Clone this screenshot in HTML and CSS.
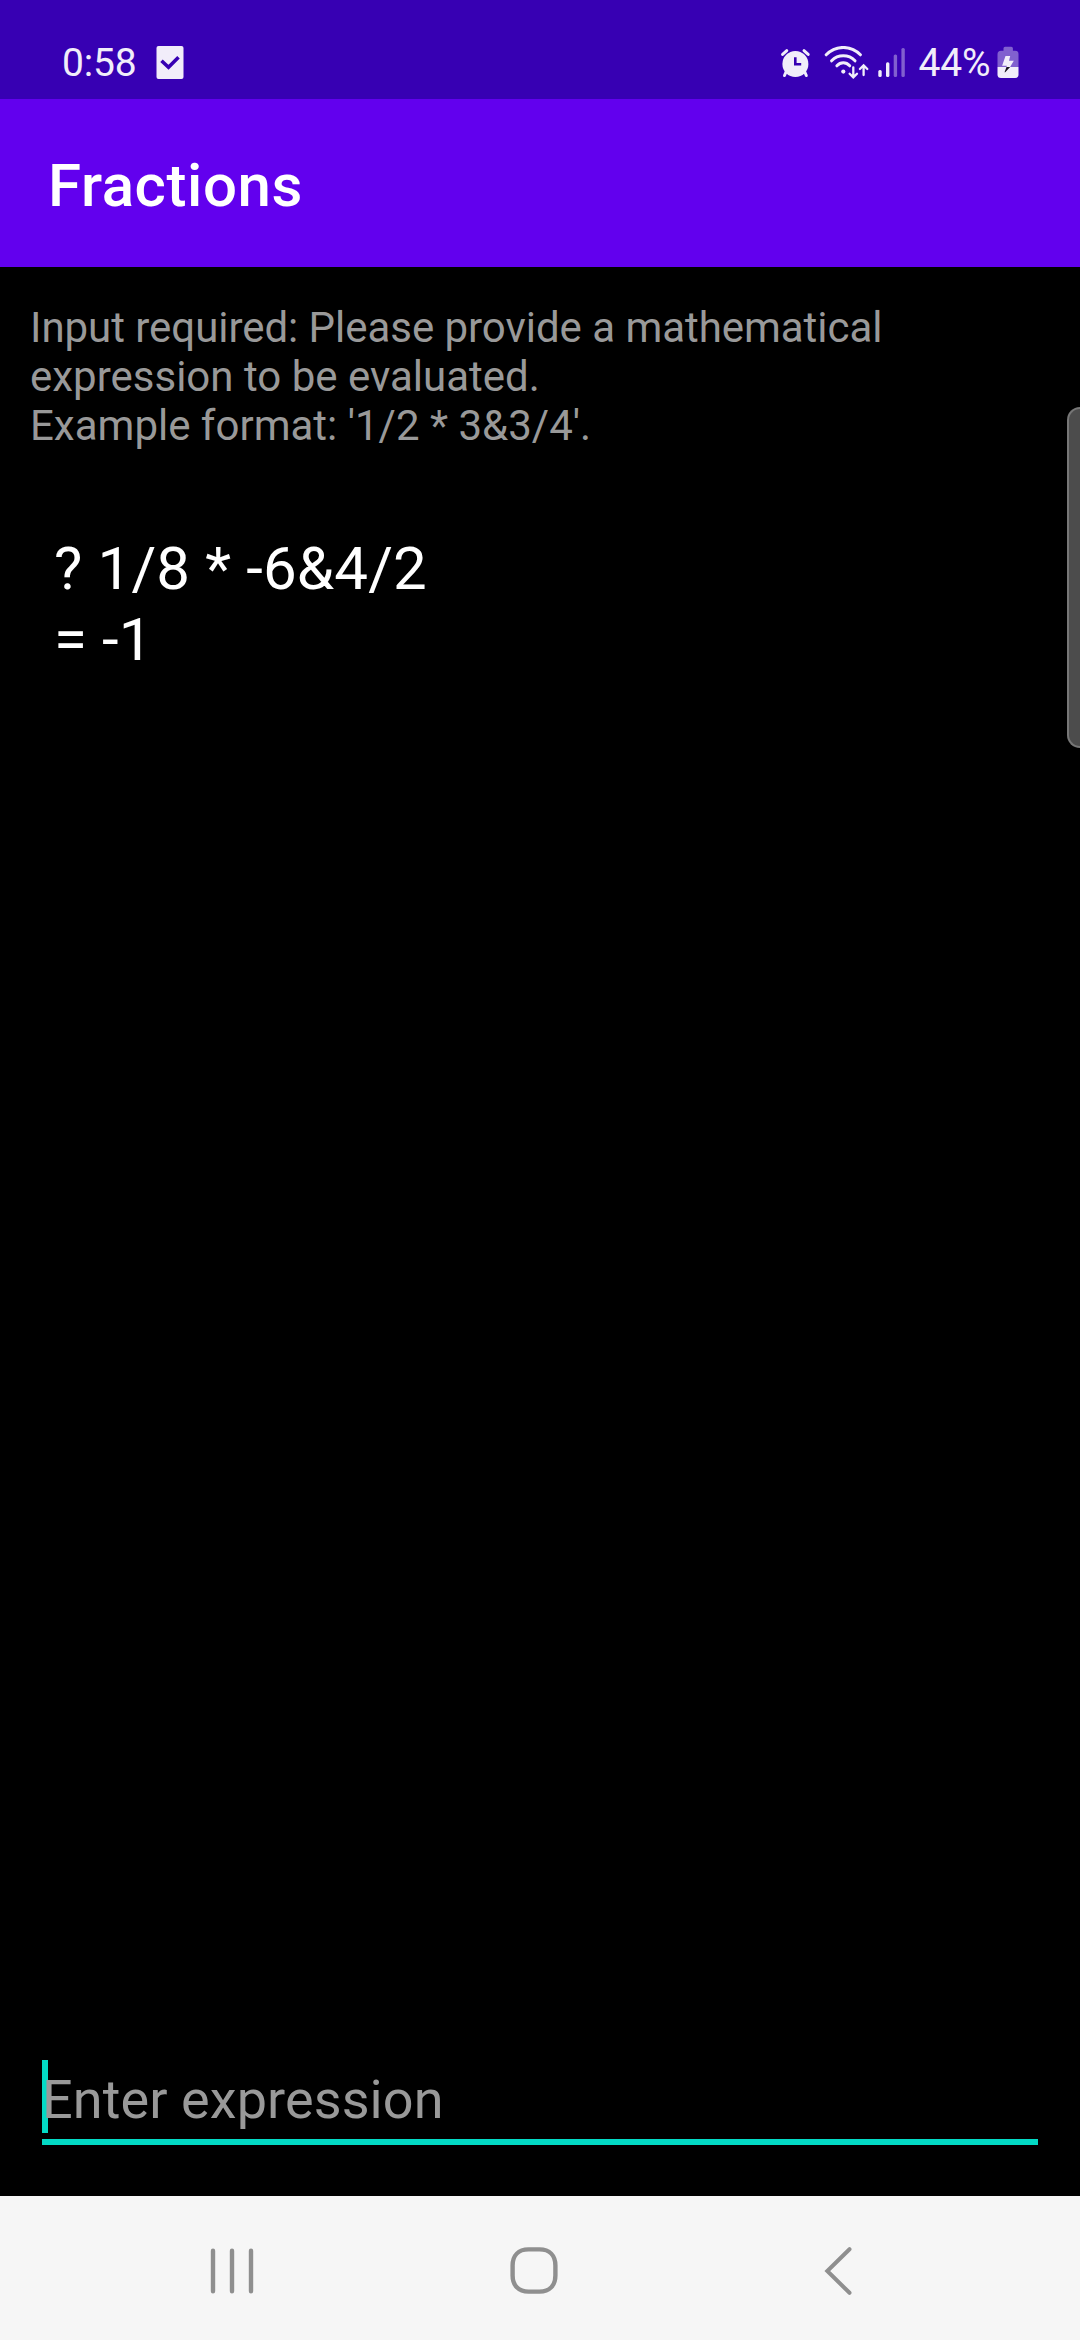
FILE: index.html
```
<!DOCTYPE html>
<html lang="en">
<head>
<meta charset="utf-8">
<title>Fractions</title>
<link rel="stylesheet" href="styles.css">
</head>
<body>
<div class="screen">
  <div class="status-bar">
    <div class="status-left">
      <span class="status-text clock">0:58</span>
      <svg class="notice-icon" width="28" height="34" viewBox="155.5 45 28 34">
        <rect x="156" y="46" width="27" height="33" rx="2" fill="#f1edfa"/>
        <path d="M161 60.7L168 67.2L178 57.2" fill="none" stroke="#3700b3" stroke-width="3.6"/>
      </svg>
    </div>
    <div class="status-right">
      <svg class="signal-icons" width="126" height="34" viewBox="779 46 126 34" fill="none" stroke="#f1edfa" stroke-linecap="round">
        <g stroke-width="3">
          <circle cx="794.4" cy="64" r="13" fill="#f1edfa" stroke="none"/>
          <path d="M781.6 54.4L785.8 50.7M803 50.7L807.2 54.4M785 72L783.5 75.5M803.8 72L805.3 75.5"/>
          <path d="M794.3 57.3V64.3H800.2" stroke="#3700b3" stroke-width="2.6" stroke-linecap="butt"/>
        </g>
        <g stroke-width="3">
          <path d="M825.2 54.8C834.8 45 849.8 45 859.4 54.8"/>
          <path d="M830.6 60.8C837 54.2 847.6 54.2 854 60.8"/>
          <path d="M835.9 65.8C839.5 61.8 845.1 61.8 848.7 65.8"/>
          <circle cx="842.3" cy="71.6" r="2.1" fill="#f1edfa" stroke="none"/>
        </g>
        <path d="M852.3 67.3V77M848.6 73.7L852.3 77.4L856 73.7M862.6 75V65.6M858.9 69L862.6 65.3L866.3 69" stroke-width="2.3"/>
        <g fill="#f1edfa" stroke="none">
          <rect x="877.3" y="70" width="3.4" height="7" rx="1.5"/>
          <rect x="885" y="62.3" width="3.4" height="14.7" rx="1.5"/>
          <rect x="892.7" y="54.6" width="3.4" height="22.4" rx="1.5" opacity=".4"/>
          <rect x="900.4" y="48" width="3.4" height="29" rx="1.5" opacity=".4"/>
        </g>
      </svg>
      <span class="status-text charge">44%</span>
      <svg class="battery-icon" width="22" height="34" viewBox="996.5 45 22 34">
        <path d="M1003 50.7V48.3Q1003 46.7 1004.6 46.7H1010.8Q1012.4 46.7 1012.4 48.3V50.7H1014.5Q1018 50.7 1018 54.2V67H997V54.2Q997 50.7 1000.5 50.7Z" fill="#8160cf"/>
        <path d="M997 67H1018V74.5Q1018 78 1014.5 78H1000.5Q997 78 997 74.5Z" fill="#f1edfa"/>
        <path d="M1005 56H1009.7L1008.5 60.7H1013.3L1009.6 67H1006L1006.4 65.7H1001.6Z" fill="#f1edfa"/>
        <path d="M1006 67H1009.6L1004.7 72.3H1004Z" fill="#15101d"/>
      </svg>
    </div>
  </div>
  <header class="app-bar"><h1 class="app-title">Fractions</h1></header>
  <main class="content">
    <p class="instructions">Input required: Please provide a mathematical<br>expression to be evaluated.<br>Example format: '1/2 * 3&amp;3/4'.</p>
    <div class="history">? 1/8 * -6&amp;4/2<br>= -1</div>
    <div class="entry">
      <span class="caret"></span>
      <span class="placeholder">Enter expression</span>
    </div>
    <div class="edge-handle"></div>
  </main>
  <nav class="nav-bar">
    <svg width="48" height="52" viewBox="0 0 48 52"><path d="M5 5.7V46.2M24 5.7V46.2M43 5.7V46.2" stroke="#8f8f8f" stroke-width="4.4" stroke-linecap="round"/></svg>
    <svg class="nav-home" width="52" height="52" viewBox="0 0 52 52"><path d="M20.500 4.400H31.500C41.500 4.400 47.400 10.500 47.400 20.500V30.500C47.400 40.500 41.500 46.600 31.500 46.600H20.500C10.500 46.600 4.600 40.500 4.600 30.500V20.500C4.600 10.500 10.500 4.400 20.500 4.400Z" fill="none" stroke="#8f8f8f" stroke-width="4.4"/></svg>
    <svg class="nav-back" width="32" height="52" viewBox="0 0 32 52"><path d="M27.500 4.200L5.300 26L27.500 47.800" fill="none" stroke="#8f8f8f" stroke-width="4" stroke-linecap="round"/></svg>
  </nav>
</div>
</body>
</html>
```
FILE: styles.css
```
* {
  box-sizing: border-box;
}

body {
  margin: 0;
  background: #000;
  font-family: Roboto, "Noto Sans", sans-serif;
}

svg {
  display: block;
  flex: none;
}

.screen {
  display: flex;
  flex-direction: column;
  width: 1080px;
  height: 2340px;
  overflow: hidden;
}

.status-bar {
  display: flex;
  justify-content: space-between;
  flex: none;
  height: 99px;
  padding: 40px 61px 0 62px;
  background: #3700b3;
}

.status-left,
.status-right {
  display: flex;
  align-items: flex-start;
}

.status-text {
  color: #f1edfa;
  font-size: 39px;
  line-height: 46px;
  letter-spacing: -0.2px;
  white-space: nowrap;
}

.clock {
  width: 93.5px;
}

.notice-icon {
  margin-top: 5px;
}

.signal-icons {
  margin-top: 6px;
}

.charge {
  width: 78.5px;
  margin-left: 13px;
}

.battery-icon {
  margin-top: 5px;
}

.app-bar {
  display: flex;
  align-items: center;
  flex: none;
  height: 168px;
  padding: 5px 48px 0;
  background: #6200ee;
}

.app-title {
  margin: 0;
  color: #fff;
  font-size: 60px;
  font-weight: 500;
  line-height: 71px;
  letter-spacing: 0.6px;
}

.content {
  position: relative;
  display: flex;
  flex: 1;
  flex-direction: column;
  padding: 36px 42px 51px 30px;
}

.instructions {
  margin: 0;
  color: #999;
  font-size: 42px;
  line-height: 49px;
}

.instructions::first-line {
  letter-spacing: -0.04px;
}

.history {
  margin: 83px 0 0 24px;
  color: #fff;
  font-size: 60px;
  line-height: 71px;
  letter-spacing: 0.15px;
}

.entry {
  position: relative;
  height: 85px;
  margin-top: auto;
  margin-left: 12px;
  padding-top: 8px;
  border-bottom: 6px solid #03dac5;
}

.caret {
  position: absolute;
  top: 0;
  left: 0;
  width: 6px;
  height: 73px;
  background: #03dac5;
}

.placeholder {
  position: relative;
  display: block;
  color: #999;
  font-size: 54px;
  line-height: 63px;
  letter-spacing: 0.09px;
}

.edge-handle {
  position: absolute;
  top: 140px;
  right: 0;
  width: 13px;
  height: 341px;
  border: 2px solid #777;
  border-right: 0;
  border-radius: 14px 0 0 14px;
  background: #4c4c4c;
}

.nav-bar {
  display: flex;
  align-items: center;
  flex: none;
  height: 144px;
  padding: 6px 0 0 208px;
  background: #f6f6f6;
}

.nav-home {
  margin-left: 252px;
}

.nav-back {
  margin-left: 261.5px;
}
```
